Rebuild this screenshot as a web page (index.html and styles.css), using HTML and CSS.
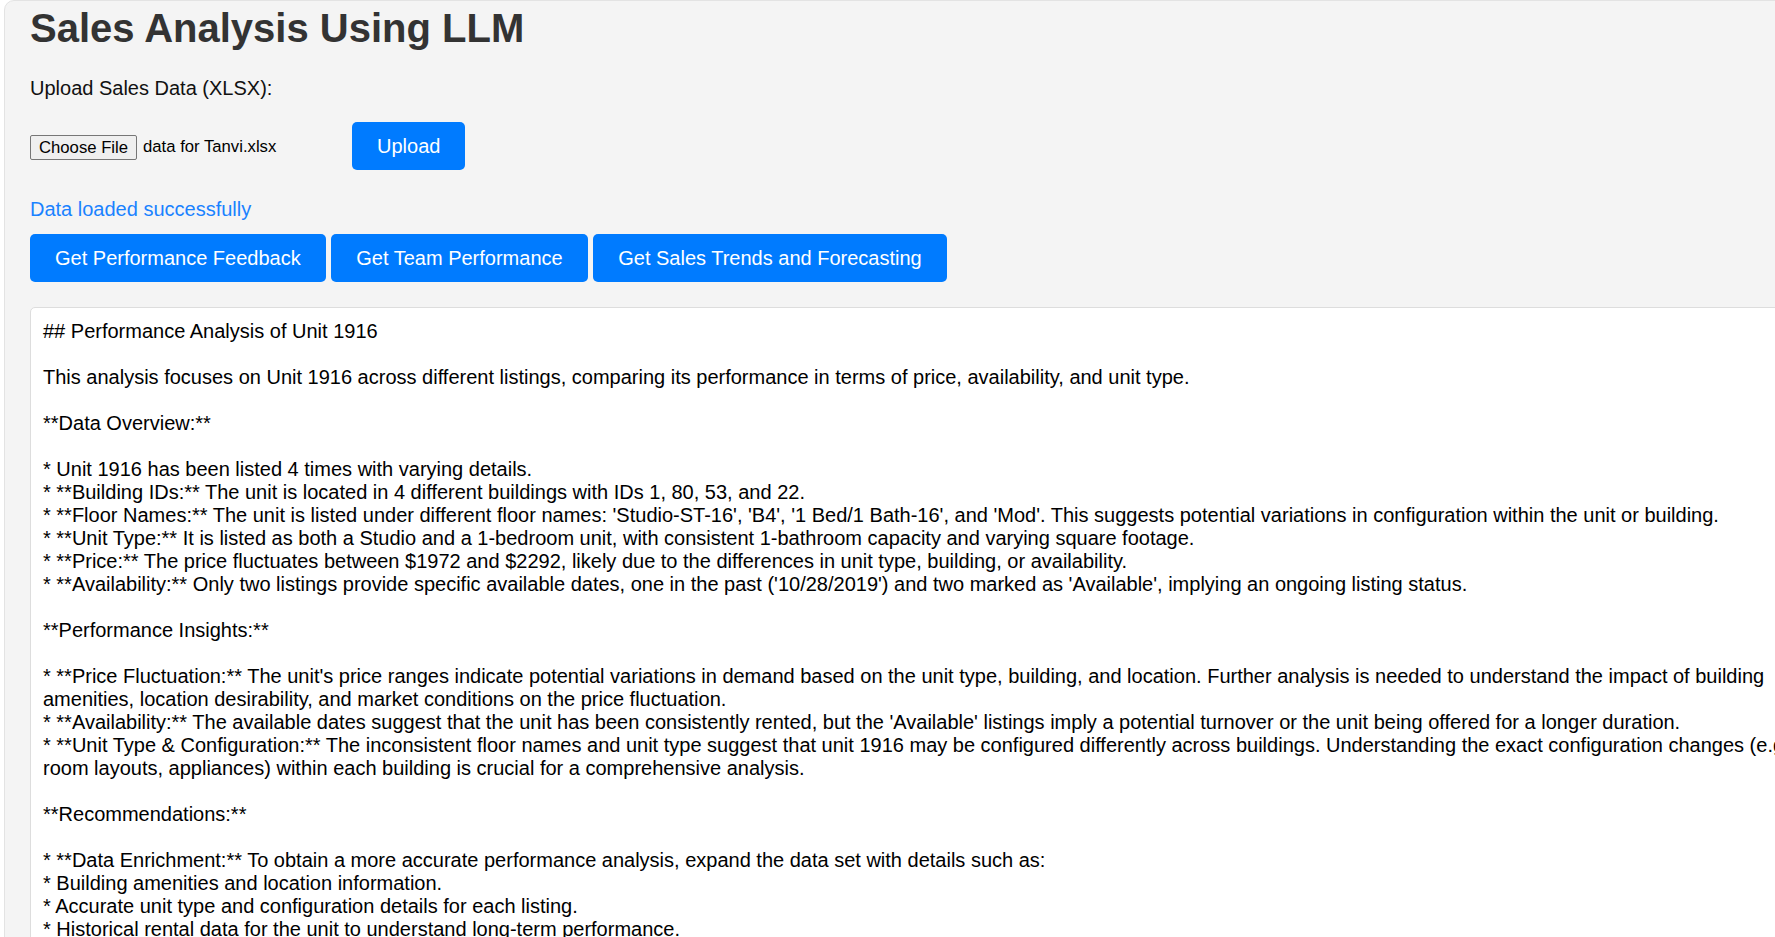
FILE: index.html
```html
<!DOCTYPE html>
<html lang="en">
<head>
<meta charset="utf-8">
<title>Sales Analysis Using LLM</title>
<link rel="stylesheet" href="styles.css">
</head>
<body>
<div class="container">
  <h1 class="title">Sales Analysis Using LLM</h1>
  <label class="upload-label">Upload Sales Data (XLSX):</label>
  <div class="upload-row">
    <div class="file-input"><span class="file-btn">Choose File</span><span class="file-name">data for Tanvi.xlsx</span></div>
    <button class="btn">Upload</button>
  </div>
  <p class="status">Data loaded successfully</p>
  <div class="actions">
    <button class="btn">Get Performance Feedback</button>
    <button class="btn">Get Team Performance</button>
    <button class="btn">Get Sales Trends and Forecasting</button>
  </div>
  <div class="output">## Performance Analysis of Unit 1916

This analysis focuses on Unit 1916 across different listings, comparing its performance in terms of price, availability, and unit type.

**Data Overview:**

* Unit 1916 has been listed 4 times with varying details.
* **Building IDs:** The unit is located in 4 different buildings with IDs 1, 80, 53, and 22.
* **Floor Names:** The unit is listed under different floor names: 'Studio-ST-16', 'B4', '1 Bed/1 Bath-16', and 'Mod'. This suggests potential variations in configuration within the unit or building.
* **Unit Type:** It is listed as both a Studio and a 1-bedroom unit, with consistent 1-bathroom capacity and varying square footage.
* **Price:** The price fluctuates between $1972 and $2292, likely due to the differences in unit type, building, or availability.
* **Availability:** Only two listings provide specific available dates, one in the past ('10/28/2019') and two marked as 'Available', implying an ongoing listing status.

**Performance Insights:**

* **Price Fluctuation:** The unit's price ranges indicate potential variations in demand based on the unit type, building, and location. Further analysis is needed to understand the impact of building amenities, location desirability, and market conditions on the price fluctuation.
* **Availability:** The available dates suggest that the unit has been consistently rented, but the 'Available' listings imply a potential turnover or the unit being offered for a longer duration.
* **Unit Type &amp; Configuration:** The inconsistent floor names and unit type suggest that unit 1916 may be configured differently across buildings. Understanding the exact configuration changes (e.g., room layouts, appliances) within each building is crucial for a comprehensive analysis.

**Recommendations:**

* **Data Enrichment:** To obtain a more accurate performance analysis, expand the data set with details such as:
* Building amenities and location information.
* Accurate unit type and configuration details for each listing.
* Historical rental data for the unit to understand long-term performance.
* Market data on comparable units in the same area.</div>
</div>
</body>
</html>
```

FILE: styles.css
```css
html, body {
  overflow: hidden;
}

body {
  margin: 0;
  background: #ffffff;
  font-family: "Liberation Sans", Arial, sans-serif;
  font-size: 20px;
  color: #000;
}

.container {
  width: 1800px;
  margin-left: 4px;
  padding: 4px 25px 40px;
  background: #f4f4f4;
  border: 1px solid #e3e3e3;
  border-radius: 10px;
}

.title {
  margin: 0;
  font-size: 40px;
  line-height: 46px;
  font-weight: bold;
  color: #333;
}

.upload-label {
  display: block;
  margin-top: 26px;
  line-height: 23px;
  color: #111;
}

.upload-row {
  display: flex;
  align-items: center;
  margin-top: 22px;
}

.file-input {
  width: 322px;
  display: flex;
  align-items: center;
  padding-top: 2px;
  font-size: 16.7px;
}

.file-btn {
  display: inline-block;
  padding: 2px 8px;
  line-height: 19px;
  border: 1px solid #767676;
  border-radius: 2px;
  background: #efefef;
  color: #000;
}

.file-name {
  margin-left: 6px;
  color: #000;
}

.btn {
  font-family: "Liberation Sans", Arial, sans-serif;
  font-size: 20px;
  line-height: 24px;
  padding: 12px 25px;
  border: 0;
  border-radius: 5px;
  background: #007bff;
  color: #fff;
  cursor: pointer;
}

.status {
  margin: 28px 0 0;
  line-height: 23px;
  color: #1a82ff;
}

.actions {
  margin-top: 13px;
}

.output {
  margin-top: 25px;
  width: 1780px;
  padding: 12px 12px 11px;
  background: #fff;
  border: 1px solid #dddddd;
  border-radius: 5px;
  white-space: pre-wrap;
  line-height: 23px;
  color: #000;
}
```
